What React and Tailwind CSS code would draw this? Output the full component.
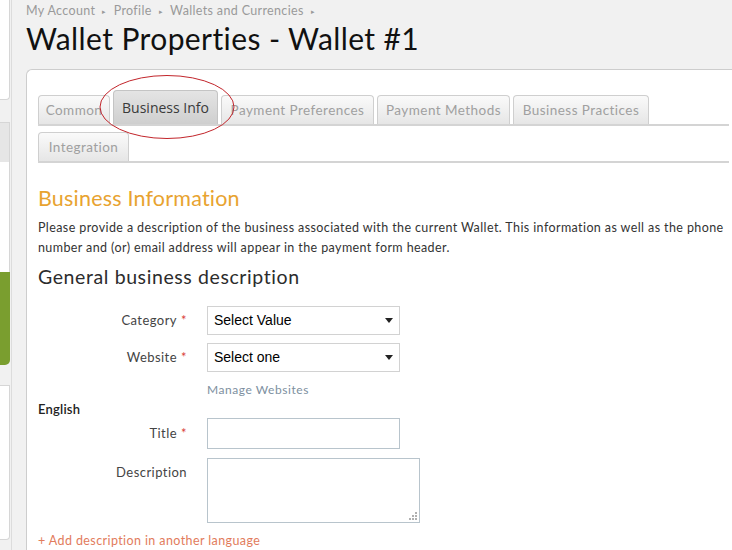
import React from 'react';

const TABS_ROW_1 = [
  { label: 'Common', w: 'w-[72px]' },
  { label: 'Business Info', active: true, w: 'w-[105px]' },
  { label: 'Payment Preferences', w: 'w-[153px]' },
  { label: 'Payment Methods', w: 'w-[133px]' },
  { label: 'Business Practices', w: 'w-[136px]' },
];

function Tab({ label, active, w }) {
  if (active) {
    return (
      <div className={`${w} h-[34px] flex items-center justify-center rounded-t-[4px] border border-b-0 border-[#c4c4c4] bg-gradient-to-b from-[#e4e4e4] to-[#cfcfcf] text-[14px] text-[#3a3a3a] font-['Open_Sans',sans-serif]`}>
        {label}
      </div>
    );
  }
  return (
    <div className={`${w} h-[29px] flex items-center justify-center rounded-t-[4px] border border-b-0 border-[#cfcfcf] bg-gradient-to-b from-[#fafafa] to-[#e6e6e6] text-[13.5px] text-[#a0a0a0] tracking-[0.45px]`}>
      {label}
    </div>
  );
}

function Field({ label, required, children, top }) {
  return (
    <div className={`flex ${top ? 'items-start' : 'items-center'}`}>
      <div className={`w-[169px] text-right text-[13px] text-[#444] tracking-[0.45px] pr-[20px] ${top ? 'pt-[5px]' : ''}`}>
        {label}
        {required && <span className="text-[#d9413a] ml-[4px]">*</span>}
      </div>
      {children}
    </div>
  );
}

function Select({ value }) {
  return (
    <div className="w-[193px] h-[29px] border border-[#d2d2d2] bg-white flex items-center justify-between pl-[6px] pr-[6px] font-['Liberation_Sans',Arial,sans-serif] text-[14px] text-black">
      <span>{value}</span>
      <svg width="8" height="5" viewBox="0 0 8 5"><path d="M0 0h8L4 5z" fill="#222" /></svg>
    </div>
  );
}

export default function App() {
  return (
    <div className="w-[732px] h-[550px] overflow-hidden bg-[#f1f1f1] flex font-['Lato',sans-serif] relative">
      {/* left sidebar stub */}
      <div className="w-[12px] shrink-0 border-r border-[#dcdcdc] flex flex-col">
        <div className="w-[10px] h-[100px] bg-white border-r border-b border-[#d6d6d6] rounded-br-[4px]" />
        <div className="w-[10px] mt-[22px] h-[40px] bg-[#e6e6e6] border-r border-t border-[#d6d6d6]" />
        <div className="w-[10px] h-[110px] bg-white border-r border-[#d6d6d6]" />
        <div className="w-[10px] h-[93px] bg-[#7a9e2f] rounded-br-[5px]" />
        <div className="w-[10px] mt-[20px] h-[155px] bg-white border-r border-t border-b border-[#d6d6d6] rounded-br-[4px]" />
      </div>

      <div className="flex-1 pl-[14px] flex flex-col">
        <div className="pt-[4px] text-[12.5px] text-[#9a9a9a] tracking-[0.35px] flex items-center gap-[7px] h-[18px]">
          <span>My Account</span>
          <span className="text-[7px]">▸</span>
          <span>Profile</span>
          <span className="text-[7px]">▸</span>
          <span>Wallets and Currencies</span>
          <span className="text-[7px]">▸</span>
        </div>
        <h1 className="text-[30px] leading-[40px] text-[#111] tracking-[0.4px]">Wallet Properties - Wallet #1</h1>

        <div className="mt-[11px] flex-1 bg-white border-l border-t border-[#cdcdcd] rounded-tl-[6px] pl-[11px] pr-[3px]">
          <div className="mt-[20px] flex items-end gap-[3px] border-b-2 border-[#d4d4d4]">
            {TABS_ROW_1.map((t) => (
              <Tab key={t.label} {...t} />
            ))}
          </div>
          <div className="mt-[6px] flex items-end border-b-2 border-[#d4d4d4]">
            <Tab label="Integration" w="w-[91px]" />
          </div>

          <h2 className="mt-[21px] text-[21.5px] leading-[28px] text-[#e8a330] tracking-[0.2px]">Business Information</h2>
          <p className="mt-[6px] text-[12.5px] leading-[20px] text-[#333] tracking-[0.4px]">
            Please provide a description of the business associated with the current Wallet. This information as well as the phone number and (or) email address will appear in the payment form header.
          </p>
          <h3 className="mt-[6px] text-[19.5px] leading-[26px] text-[#2c2c2c] tracking-[0.6px]">General business description</h3>

          <div className="mt-[16px] flex flex-col">
            <Field label="Category" required>
              <Select value="Select Value" />
            </Field>
            <div className="mt-[8px]">
              <Field label="Website" required>
                <Select value="Select one" />
              </Field>
            </div>
            <div className="ml-[169px] mt-[9px] text-[12px] leading-[18px] text-[#7d8fa0] tracking-[0.55px]">Manage Websites</div>
            <div className="mt-[2px] text-[13px] leading-[16px] font-semibold text-[#222] tracking-[0.2px]">English</div>
            <div className="mt-[1px]">
              <Field label="Title" required>
                <div className="w-[193px] h-[31px] border border-[#b8c4cc] bg-white" />
              </Field>
            </div>
            <div className="mt-[9px]">
              <Field label="Description" top>
                <div className="w-[213px] h-[65px] border border-[#b8c4cc] bg-white relative">
                  <svg className="absolute right-[1px] bottom-[1px]" width="10" height="10" viewBox="0 0 10 10">
                    <g fill="#b0b0b0">
                      <rect x="7" y="1" width="2" height="2" />
                      <rect x="4" y="4" width="2" height="2" />
                      <rect x="7" y="4" width="2" height="2" />
                      <rect x="1" y="7" width="2" height="2" />
                      <rect x="4" y="7" width="2" height="2" />
                      <rect x="7" y="7" width="2" height="2" />
                    </g>
                  </svg>
                </div>
              </Field>
            </div>
            <div className="mt-[9px] text-[12.5px] leading-[18px] text-[#e27c5c] tracking-[0.4px]">+ Add description in another language</div>
          </div>
        </div>
      </div>

      {/* annotation circle around active tab */}
      <svg className="absolute left-0 top-0 pointer-events-none" width="732" height="550">
        <ellipse cx="167" cy="107" rx="67" ry="31.5" fill="none" stroke="#c2252b" strokeWidth="1" />
      </svg>
    </div>
  );
}
